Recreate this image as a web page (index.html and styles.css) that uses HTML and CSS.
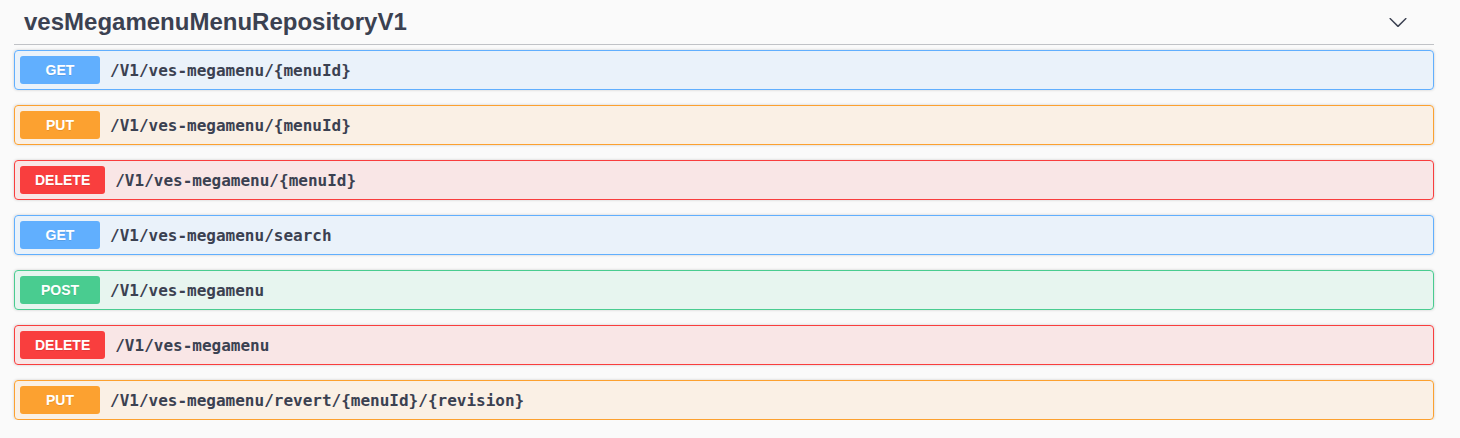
FILE: index.html
```html
<!DOCTYPE html>
<html>
<head>
<meta charset="utf-8">
<link rel="stylesheet" href="styles.css">
</head>
<body>
<div class="tag-section">
  <h3 class="tag-header">
    <span class="tag-title">vesMegamenuMenuRepositoryV1</span>
    <button class="expand" aria-label="collapse">
      <svg width="20" height="20" viewBox="0 0 20 20"><path d="M17.418 6.109c.272-.268.709-.268.979 0s.271.701 0 .969l-7.908 7.83c-.27.268-.707.268-.979 0l-7.908-7.83c-.27-.268-.27-.701 0-.969.271-.268.709-.268.979 0L10 13.25l7.418-7.141z" fill="#3b4151"/></svg>
    </button>
  </h3>
  <div class="ops">
    <div class="op op-get"><span class="method">GET</span><span class="path">/V1/ves-megamenu/{menuId}</span></div>
    <div class="op op-put"><span class="method">PUT</span><span class="path">/V1/ves-megamenu/{menuId}</span></div>
    <div class="op op-delete"><span class="method">DELETE</span><span class="path">/V1/ves-megamenu/{menuId}</span></div>
    <div class="op op-get"><span class="method">GET</span><span class="path">/V1/ves-megamenu/search</span></div>
    <div class="op op-post"><span class="method">POST</span><span class="path">/V1/ves-megamenu</span></div>
    <div class="op op-delete"><span class="method">DELETE</span><span class="path">/V1/ves-megamenu</span></div>
    <div class="op op-put"><span class="method">PUT</span><span class="path">/V1/ves-megamenu/revert/{menuId}/{revision}</span></div>
  </div>
</div>
</body>
</html>
```
FILE: styles.css
```css
html, body {
  margin: 0;
  padding: 0;
  background: #fafafa;
}
body {
  font-family: "Liberation Sans", Arial, sans-serif;
  color: #3b4151;
}
.tag-section {
  width: 1420px;
  margin-left: 14px;
}
.tag-header {
  display: flex;
  align-items: center;
  margin: 0 0 5px 0;
  padding: 10px 20px 10px 10px;
  height: 24px;
  border-bottom: 1px solid rgba(59, 65, 81, 0.3);
  font-size: 24px;
  font-weight: 700;
  line-height: 24px;
}
.tag-title {
  flex: 1;
}
.expand {
  border: none;
  background: none;
  padding: 0 6px 0 10px;
  margin: 0;
  display: flex;
  align-items: center;
}
.expand svg {
  display: block;
}
.ops {
  display: flex;
  flex-direction: column;
  gap: 15px;
}
.op {
  display: flex;
  align-items: center;
  padding: 5px;
  border: 1px solid;
  border-radius: 4px;
  box-shadow: 0 0 3px rgba(0, 0, 0, 0.19);
  height: 28px;
}
.method {
  box-sizing: border-box;
  min-width: 80px;
  padding: 6px 15px;
  border-radius: 3px;
  font-size: 14px;
  font-weight: 700;
  line-height: 16px;
  text-align: center;
  color: #fff;
  text-shadow: 0 1px 0 rgba(0, 0, 0, 0.1);
}
.path {
  padding: 0 10px;
  font-family: "DejaVu Sans Mono", monospace;
  font-size: 16px;
  font-weight: 700;
  color: #3b4151;
}
.op-get { background: rgba(97, 175, 254, 0.1); border-color: #61affe; }
.op-get .method { background: #61affe; }
.op-put { background: rgba(252, 161, 48, 0.1); border-color: #fca130; }
.op-put .method { background: #fca130; }
.op-delete { background: rgba(249, 62, 62, 0.1); border-color: #f93e3e; }
.op-delete .method { background: #f93e3e; }
.op-post { background: rgba(73, 204, 144, 0.1); border-color: #49cc90; }
.op-post .method { background: #49cc90; }
```
